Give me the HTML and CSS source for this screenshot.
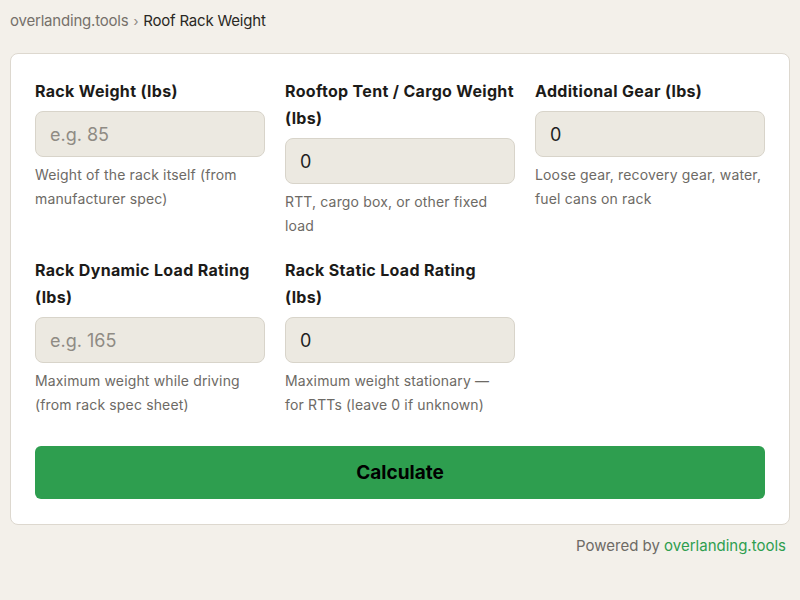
FILE: index.html
```html
<!DOCTYPE html>
<html lang="en">
<head>
    <meta charset="UTF-8">
    <meta name="viewport" content="width=device-width, initial-scale=1.0">
    <title>Roof Rack Weight</title>
    <link rel="stylesheet" href="styles.css">
</head>
<body>

    <nav class="crumbs">
        <a href="#" class="crumb-home">overlanding.tools</a>
        <span class="crumb-sep">›</span>
        <span class="crumb-current">Roof Rack Weight</span>
    </nav>

    <main class="card">
        <form id="rackForm">
            <div class="grid">
                <div class="field">
                    <label for="rack-weight">Rack Weight (lbs)</label>
                    <input type="text" id="rack-weight" placeholder="e.g. 85">
                    <p class="hint">Weight of the rack itself (from manufacturer spec)</p>
                </div>
                <div class="field">
                    <label for="rtt-weight">Rooftop Tent / Cargo Weight (lbs)</label>
                    <input type="text" id="rtt-weight" value="0">
                    <p class="hint">RTT, cargo box, or other fixed load</p>
                </div>
                <div class="field">
                    <label for="gear-weight">Additional Gear (lbs)</label>
                    <input type="text" id="gear-weight" value="0">
                    <p class="hint">Loose gear, recovery gear, water, fuel cans on rack</p>
                </div>
                <div class="field">
                    <label for="dynamic-rating">Rack Dynamic Load Rating (lbs)</label>
                    <input type="text" id="dynamic-rating" placeholder="e.g. 165">
                    <p class="hint">Maximum weight while driving (from rack spec sheet)</p>
                </div>
                <div class="field">
                    <label for="static-rating">Rack Static Load Rating (lbs)</label>
                    <input type="text" id="static-rating" value="0">
                    <p class="hint">Maximum weight stationary — for&nbsp;RTTs (leave 0 if unknown)</p>
                </div>
            </div>
            <button type="submit" class="btn">Calculate</button>
        </form>
    </main>

    <footer class="powered">
        Powered by <a href="#">overlanding.tools</a>
    </footer>

</body>
</html>
```

FILE: styles.css
```css
body {
    font-family: Inter, "Noto Sans", sans-serif;
    margin: 0;
    padding: 10px;
    background-color: #f3f0ea;
    color: #1f1f1f;
}
a {
    text-decoration: none;
}
.crumbs {
    font-size: 15px;
    line-height: 22px;
    display: flex;
    align-items: center;
    gap: 5px;
    letter-spacing: -0.2px;
}
.crumb-home {
    color: #76716a;
}
.crumb-sep {
    color: #8a857e;
    font-size: 13px;
}
.crumb-current {
    color: #2a2824;
}
.card {
    margin-top: 21px;
    background: #ffffff;
    border: 1px solid #ddd8cf;
    border-radius: 8px;
    padding: 24px 24px 25px;
}
.grid {
    display: grid;
    grid-template-columns: repeat(3, 1fr);
    column-gap: 20px;
    row-gap: 20px;
}
.field label {
    display: block;
    font-weight: 700;
    font-size: 16px;
    line-height: 27px;
    color: #1c1b19;
    margin-bottom: 6px;
    letter-spacing: 0.32px;
}
.field input {
    display: block;
    box-sizing: border-box;
    width: 100%;
    height: 46px;
    padding: 0 14px;
    font-family: inherit;
    font-size: 18px;
    color: #1f1f1f;
    background: #ece9e1;
    border: 1px solid #d8d4ca;
    border-radius: 8px;
}
.field input::placeholder {
    color: #8f8b84;
}
.hint {
    margin: 6px 0 0;
    font-size: 14px;
    line-height: 23.5px;
    color: #6d6a65;
    letter-spacing: 0.15px;
}
.btn {
    display: block;
    width: 100%;
    height: 53px;
    margin-top: 30px;
    border: none;
    border-radius: 6px;
    background: #2e9e4f;
    color: #000;
    font-family: inherit;
    font-weight: 700;
    font-size: 19px;
}
.powered {
    margin-top: 10px;
    text-align: right;
    font-size: 15px;
    line-height: 22px;
    color: #6d6a65;
    padding-right: 4px;
}
.powered a {
    color: #2e9e4f;
}
```
